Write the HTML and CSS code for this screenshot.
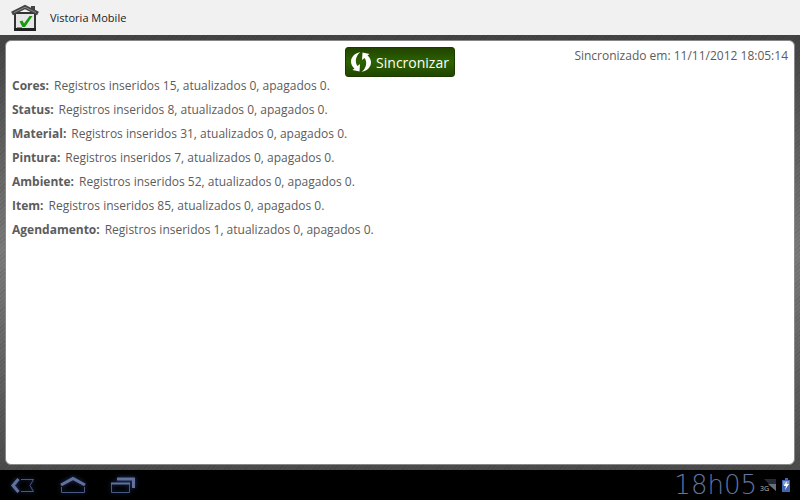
FILE: index.html
```html
<!DOCTYPE html>
<html lang="pt-BR">
<head>
    <meta charset="UTF-8">
    <meta name="viewport" content="width=device-width, initial-scale=1.0">
    <title>Vistoria Mobile</title>
    <link rel="stylesheet" href="styles.css">
</head>
<body>
    <header class="app-bar">
        <svg width="28" height="28" viewBox="0 0 28 28" aria-hidden="true">
            <path d="M20 2h4v6h-4z" fill="#444"/>
            <rect x="4" y="9" width="20" height="16" fill="#e6e6e6" stroke="#333" stroke-width="2"/>
            <path d="M3 24h22v3H3z" fill="#222"/>
            <path d="M1 9.500 14 3l13 6.500" fill="none" stroke="#444" stroke-width="4"/>
            <path d="M3 8.600 14 3.200l11 5.400" fill="none" stroke="#8a8a8a" stroke-width="1"/>
            <path d="M8.500 17.500l3-1 1.500 3 5.500-7.500h3l-7.500 11h-2.500z" fill="#169a0e"/>
            <path d="M6 23.500h5" stroke="#888"/>
        </svg>
        <h1>Vistoria Mobile</h1>
    </header>

    <main class="content">
        <section class="panel">
            <div class="toolbar">
                <button type="button" class="sync-button">
                    <svg width="20" height="22" viewBox="0 0 20 22" aria-hidden="true">
                        <path d="M9.500 1C3 2.500 0 6.500 0 10.500c0 3 1.500 5.500 3.500 7L1.500 19l7 1.500L9 13l-2.500 2C3.500 11 4.500 5 9.500 1z" fill="#fff"/>
                        <path d="M10.500 21c6.500-1.500 9.500-5.500 9.500-9.500 0-3-1.500-5.500-3.500-7l2-1.500-7-1.500L11 9l2.500-2c3 4 2 10-3 14z" fill="#fff"/>
                    </svg>
                    Sincronizar
                </button>
                <p class="sync-date">Sincronizado em: 11/11/2012 18:05:14</p>
            </div>
            <dl class="results">
                <div><dt>Cores:</dt><dd>Registros inseridos 15, atualizados 0, apagados 0.</dd></div>
                <div><dt>Status:</dt><dd>Registros inseridos 8, atualizados 0, apagados 0.</dd></div>
                <div><dt>Material:</dt><dd>Registros inseridos 31, atualizados 0, apagados 0.</dd></div>
                <div><dt>Pintura:</dt><dd>Registros inseridos 7, atualizados 0, apagados 0.</dd></div>
                <div><dt>Ambiente:</dt><dd>Registros inseridos 52, atualizados 0, apagados 0.</dd></div>
                <div><dt>Item:</dt><dd>Registros inseridos 85, atualizados 0, apagados 0.</dd></div>
                <div><dt>Agendamento:</dt><dd>Registros inseridos 1, atualizados 0, apagados 0.</dd></div>
            </dl>
        </section>
    </main>

    <footer class="system-bar">
        <nav class="nav-buttons">
            <button type="button" aria-label="Voltar">
                <svg width="26" height="18" viewBox="0 0 26 18">
                    <path d="M8.500 3L3 9.500 8.500 16" stroke="#62719c" stroke-width="3" fill="none"/>
                    <path d="M11 3.500h12.500L20 9.500l3.500 6H11" stroke="#4a5983" stroke-width="1" fill="none"/>
                </svg>
            </button>
            <button type="button" aria-label="Início">
                <svg width="26" height="18" viewBox="0 0 26 18">
                    <path d="M1 9L13 2.500 25 9" stroke="#62719c" stroke-width="3" fill="none"/>
                    <path d="M1.500 11v5.500h23V11" stroke="#4a5983" stroke-width="1" fill="none"/>
                </svg>
            </button>
            <button type="button" aria-label="Aplicativos recentes">
                <svg width="26" height="18" viewBox="0 0 26 18">
                    <path d="M7 3h16.500v9" stroke="#62719c" stroke-width="3" fill="none"/>
                    <path d="M1.500 7.500h18v9h-18z" stroke="#4a5983" stroke-width="1" fill="none"/>
                    <path d="M1 7.500h19" stroke="#62719c" stroke-width="2"/>
                </svg>
            </button>
        </nav>
        <div class="status">
            <span class="clock">18h05</span>
            <span class="signal">
                <svg width="13" height="13" viewBox="0 0 13 13" aria-hidden="true">
                    <path d="M1 0h12v12z" fill="#252b36"/>
                    <path d="M5 5h8v7z" fill="#68707e"/>
                </svg>
                <span class="network">3G</span>
            </span>
            <svg width="8" height="14" viewBox="0 0 8 14" aria-hidden="true">
                <path d="M3 0h3v2h2v12H0V2h3z" fill="#4165b0"/>
                <path d="M1 3h6v4H1z" fill="#7f9ad0"/>
                <path d="M5 3L1.500 8H4l-1 4 4-6H4.500z" fill="#fff"/>
            </svg>
        </div>
    </footer>
</body>
</html>
```

FILE: styles.css
```css
* {
    box-sizing: border-box;
}
body {
    display: flex;
    flex-direction: column;
    min-height: 100vh;
    margin: 0;
    font-family: "Open Sans", "Noto Sans", sans-serif;
    font-size: 12px;
    color: #5c5c5c;
}
h1, p, dl, dd {
    margin: 0;
}
button {
    border: none;
    font-family: inherit;
    cursor: pointer;
}
svg {
    display: block;
}

/* title bar */
.app-bar {
    display: flex;
    align-items: center;
    gap: 11px;
    height: 35px;
    padding: 0 11px;
    background-color: #f1f1f1;
}
h1 {
    font-size: 11px;
    font-weight: normal;
    color: #222;
}

/* content */
.content {
    flex: 1;
    display: flex;
    padding: 5px;
    background:
        repeating-linear-gradient(135deg, rgba(0,0,0,0.08) 0 1px, transparent 1px 3px),
        linear-gradient(#444, #7c7c7c 50%, #4c4c4c);
}
.panel {
    flex: 1;
    padding: 6px;
    background-color: #fff;
    border: 1px solid #888;
    border-radius: 6px;
}
.toolbar {
    display: grid;
    grid-template-columns: 1fr auto 1fr;
}
.sync-button {
    grid-column: 2;
    display: flex;
    align-items: center;
    gap: 5px;
    height: 30px;
    padding: 0 5px;
    background: linear-gradient(#214400, #2c6200 50%, #214600);
    border: 1px solid #1b3a00;
    border-radius: 3px;
    font-size: 14px;
    color: #fff;
}
.sync-date {
    justify-self: end;
    line-height: 18px;
}
.results {
    display: grid;
    gap: 6px;
}
.results div {
    display: flex;
    gap: 5px;
    line-height: 18px;
}
.results dt {
    font-weight: bold;
}

/* system bar */
.system-bar {
    display: flex;
    justify-content: space-between;
    align-items: center;
    height: 30px;
    padding: 0 10px;
    background-color: #000;
}
.nav-buttons {
    display: flex;
    gap: 24px;
}
.nav-buttons button {
    padding: 0;
    background: none;
    filter: drop-shadow(0 0 2px #233c78);
}
.status {
    display: flex;
    align-items: center;
    gap: 6px;
}
.clock {
    font-family: "DejaVu Sans", sans-serif;
    font-size: 26px;
    font-weight: 200;
    line-height: 30px;
    color: #63749f;
}
.signal {
    position: relative;
}
.network {
    position: absolute;
    left: -3px;
    bottom: -1px;
    font-size: 7px;
    line-height: 8px;
    color: #bbb;
}
```
